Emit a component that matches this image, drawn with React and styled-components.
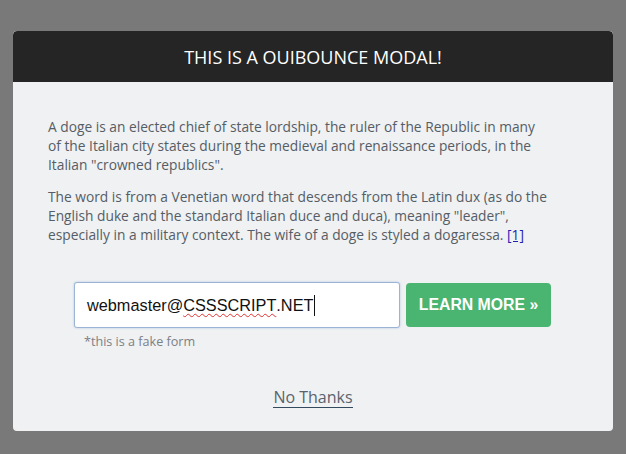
import styled, { createGlobalStyle } from "styled-components";

const GlobalStyle = createGlobalStyle`
    html, body {
        margin: 0;
        padding: 0;
        background: #797979;
    }
    body {
        font-family: "Open Sans", "Liberation Sans", sans-serif;
    }
`;

const Overlay = styled.div`
    width: 626px;
    height: 454px;
    padding-top: 31px;
    box-sizing: border-box;
    display: flex;
    justify-content: center;
    align-items: flex-start;
`;

const Modal = styled.div`
    width: 600px;
    height: 400px;
    background: #f0f1f2;
    border-radius: 4px;
    display: flex;
    flex-direction: column;
    overflow: hidden;
`;

const Title = styled.div`
    height: 51px;
    background: #252525;
    display: flex;
    align-items: center;
    justify-content: center;
    border-radius: 4px 4px 0 0;
`;

const TitleText = styled.h3`
    margin: 0;
    color: #fff;
    font-size: 18px;
    font-weight: 400;
    text-transform: uppercase;
`;

const Body = styled.div`
    padding: 23px 35px 0;
`;

const Paragraph = styled.p`
    margin: 12px 0 13px;
    max-width: 500px;
    font-size: 13.75px;
    line-height: 19px;
    color: #555d66;
`;

const Ref = styled.a`
    color: #2020b0;
    text-decoration: underline;
`;

const Form = styled.form`
    display: flex;
    flex-direction: column;
    align-items: flex-start;
    margin: 38px 0 0 26px;
`;

const FormRow = styled.div`
    display: flex;
    align-items: center;
    gap: 6px;
`;

const FakeInput = styled.div`
    width: 326px;
    height: 46px;
    box-sizing: border-box;
    padding: 0 12px;
    display: flex;
    align-items: center;
    background: #fff;
    border: 1px solid #9bb4d6;
    border-radius: 3px;
    box-shadow: 0 0 2px rgba(120, 160, 215, 0.6);
    font-family: "Liberation Sans", Arial, sans-serif;
    font-size: 16.3px;
    color: #111;
`;

const Misspelled = styled.span`
    text-decoration: underline wavy #e03030;
    text-decoration-thickness: 1px;
    text-underline-offset: 2px;
`;

const Caret = styled.span`
    display: inline-block;
    width: 1px;
    height: 21px;
    margin-left: 1px;
    background: #111;
`;

const Submit = styled.button`
    width: 145px;
    height: 44px;
    border: none;
    border-radius: 4px;
    background: #4ab471;
    color: #fff;
    font-family: "Liberation Sans", Arial, sans-serif;
    font-weight: bold;
    font-size: 15.8px;
    text-transform: uppercase;
    cursor: pointer;
`;

const Note = styled.p`
    margin: 5px 0 0 10px;
    font-size: 12.6px;
    color: #7b8087;
`;

const Footer = styled.div`
    margin-top: auto;
    padding-bottom: 23px;
    text-align: center;
`;

const NoThanks = styled.span`
    display: inline-block;
    font-size: 16px;
    line-height: 20px;
    color: #59636e;
    border-bottom: 1px solid #344a5f;
    cursor: pointer;
`;

export default function App() {
    return (
        <>
            <GlobalStyle />
            <Overlay>
                <Modal>
                    <Title>
                        <TitleText>This is a OuiBounce modal!</TitleText>
                    </Title>
                    <Body>
                        <Paragraph>
                            A doge is an elected chief of state lordship, the ruler of the Republic in many of the
                            Italian city states during the medieval and renaissance periods, in the Italian "crowned
                            republics".
                        </Paragraph>
                        <Paragraph>
                            The word is from a Venetian word that descends from the Latin dux (as do the English duke
                            and the standard Italian duce and duca), meaning "leader", especially in a military context.
                            The wife of a doge is styled a dogaressa. <Ref href="#">[1]</Ref>
                        </Paragraph>
                        <Form onSubmit={(e) => e.preventDefault()}>
                            <FormRow>
                                <FakeInput>
                                    webmaster@<Misspelled>CSSSCRIPT</Misspelled>.NET
                                    <Caret />
                                </FakeInput>
                                <Submit type="submit">Learn more &raquo;</Submit>
                            </FormRow>
                            <Note>*this is a fake form</Note>
                        </Form>
                    </Body>
                    <Footer>
                        <NoThanks>No Thanks</NoThanks>
                    </Footer>
                </Modal>
            </Overlay>
        </>
    );
}
